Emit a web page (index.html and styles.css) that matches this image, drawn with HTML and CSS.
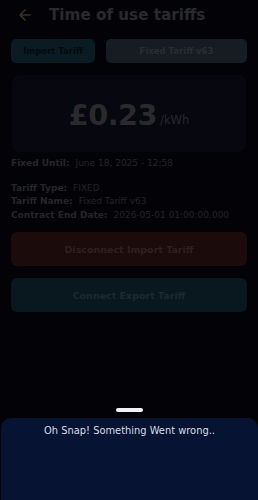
FILE: index.html
```html
<!DOCTYPE html>
<html>
<head>
<meta charset="utf-8">
<link rel="stylesheet" href="styles.css">
</head>
<body>
<div class="screen">
  <header class="header">
    <svg class="back" width="14" height="14" viewBox="0 0 14 14"><path d="M12 7H2M7 2L2 7l5 5" fill="none" stroke="#3a3122" stroke-width="1.6" stroke-linecap="round" stroke-linejoin="round"/></svg>
    <h1 class="title">Time of use tariffs</h1>
  </header>
  <div class="tabs">
    <div class="tab tab-import">Import Tariff</div>
    <div class="tab tab-fixed">Fixed Tariff v63</div>
  </div>
  <div class="price-card">
    <span class="price">£0.23</span><span class="unit">/kWh</span>
  </div>
  <div class="row fixed-until"><span class="label">Fixed Until:</span><span class="value">June 18, 2025 - 12:58</span></div>
  <div class="details">
    <div class="row"><span class="label">Tariff Type:</span><span class="value">FIXED</span></div>
    <div class="row"><span class="label">Tariff Name:</span><span class="value">Fixed Tariff v63</span></div>
    <div class="row"><span class="label">Contract End Date:</span><span class="value">2026-05-01 01:00:00.000</span></div>
  </div>
  <div class="btn btn-disconnect">Disconnect Import Tariff</div>
  <div class="btn btn-connect">Connect Export Tariff</div>
</div>
<div class="handle"></div>
<div class="sheet">
  <p class="sheet-text">Oh Snap! Something Went wrong..</p>
</div>
</body>
</html>
```
FILE: styles.css
```css
* { box-sizing: border-box; }
html, body { margin: 0; padding: 0; }
body {
  width: 258px;
  height: 500px;
  background: #030307;
  font-family: "DejaVu Sans", sans-serif;
  overflow: hidden;
  position: relative;
}
.screen {
  padding: 0 11px;
}
.header {
  display: flex;
  align-items: center;
  height: 30px;
}
.back {
  margin-left: 7px;
  margin-right: 17px;
}
.title {
  margin: 0;
  font-size: 15.2px;
  font-weight: bold;
  color: #2a2a2c;
}
.tabs {
  display: flex;
  gap: 11px;
  margin-top: 9px;
}
.tab {
  height: 24px;
  border-radius: 5px;
  display: flex;
  align-items: center;
  justify-content: center;
  font-size: 8.5px;
  font-weight: bold;
}
.tab-import {
  width: 84px;
  background: #0a1b23;
  color: #04090c;
}
.tab-fixed {
  flex: 1;
  background: #161c23;
  color: #2a2d31;
}
.price-card {
  margin: 12px 1px 0;
  height: 77px;
  border-radius: 8px;
  background: #06070f;
  display: flex;
  align-items: center;
  justify-content: center;
  padding-top: 2px;
}
.price {
  font-size: 28.7px;
  font-weight: bold;
  color: #2a2a2c;
  letter-spacing: -0.5px;
}
.unit {
  font-size: 11.5px;
  color: #28282a;
  margin-left: 3px;
  margin-top: 10px;
}
.row {
  font-size: 9px;
  line-height: 13.5px;
  color: #242426;
  white-space: nowrap;
}
.label {
  font-weight: bold;
  color: #262628;
  margin-right: 6px;
}
.fixed-until {
  margin-top: 5px;
}
.details {
  margin-top: 11px;
}
.btn {
  height: 34px;
  border-radius: 6px;
  display: flex;
  align-items: center;
  justify-content: center;
  font-size: 9.5px;
  font-weight: bold;
}
.btn-disconnect {
  margin-top: 10px;
  background: #1c0b0b;
  color: #2e2020;
}
.btn-connect {
  margin-top: 12px;
  background: #09181f;
  color: #1b2a30;
}
.handle {
  position: absolute;
  left: 116px;
  top: 408px;
  width: 27px;
  height: 4px;
  border-radius: 2px;
  background: #f2f2f2;
}
.sheet {
  position: absolute;
  left: 1px;
  right: 0;
  top: 418px;
  bottom: 0;
  background: #071332;
  border-radius: 10px 10px 0 0;
}
.sheet-text {
  margin: 7px 0 0;
  text-align: center;
  font-size: 9.9px;
  color: #d8dbe4;
}
```
